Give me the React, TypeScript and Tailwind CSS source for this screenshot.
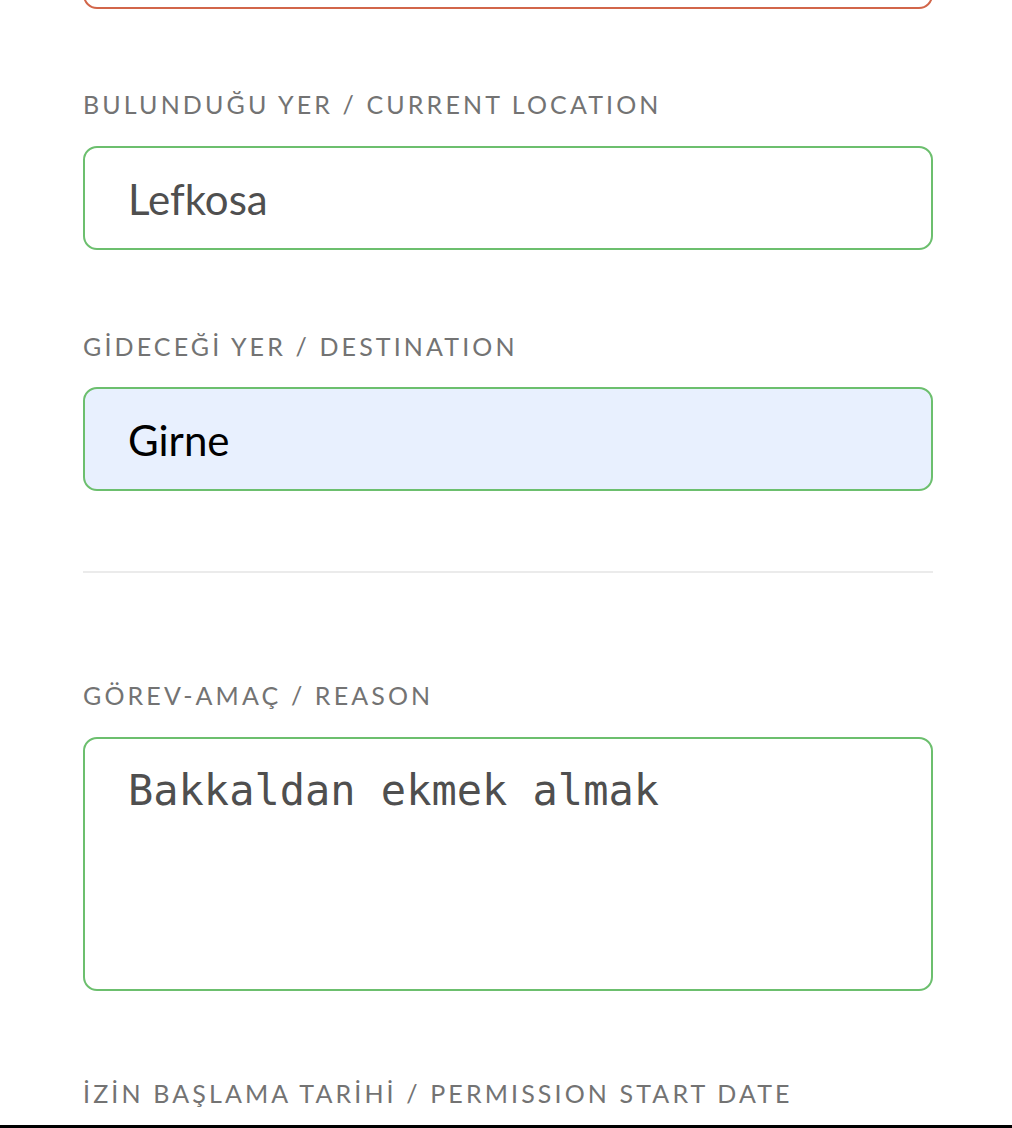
import React from "react";

const Label = ({ children, className = "" }: any) => (
  <div
    className={`h-[30px] leading-[30px] text-[25px] tracking-[0.125em] uppercase text-[#737373] ${className}`}
    style={{ fontFamily: "Lato, 'Noto Sans', sans-serif" }}
  >
    {children}
  </div>
);

export default function App() {
  return (
    <div className="bg-white w-[1012px] h-[1128px] overflow-hidden flex flex-col">
      <div className="h-[1125px] overflow-hidden px-[83px] w-[1016px]">
        {/* previous field, scrolled out of view */}
        <div className="h-[104px] -mt-[95px] rounded-[14px] border-2 border-[#d2664a]" />

        <Label className="mt-[80px]">Bulunduğu Yer / Current Location</Label>
        <div
          className="mt-[27px] h-[104px] rounded-[14px] border-2 border-[#6cbf6e] bg-white flex items-center pl-[43px] pt-[3px] text-[42px] text-[#4f4f4f] [font-variant-ligatures:none]"
          style={{ fontFamily: "Lato, 'Noto Sans', sans-serif" }}
        >
          Lefkosa
        </div>

        <Label className="mt-[81px]">Gİdeceğİ Yer / Destination</Label>
        <div
          className="mt-[26px] h-[104px] rounded-[14px] border-2 border-[#6cbf6e] bg-[#e8f0fe] flex items-center pl-[43px] pt-[3px] text-[42px] text-black"
          style={{ fontFamily: "Lato, 'Noto Sans', sans-serif" }}
        >
          Girne
        </div>

        <div className="mt-[80px] h-[2px] bg-[#ebebeb]" />

        <Label className="mt-[107px]">Görev-Amaç / Reason</Label>
        <div
          className="mt-[27px] h-[254px] rounded-[14px] border-2 border-[#6cbf6e] bg-white pl-[43px] pt-[26px] text-[42px] leading-[52px] text-[#4f4f4f]"
          style={{ fontFamily: "'DejaVu Sans Mono', 'Liberation Mono', monospace" }}
        >
          Bakkaldan ekmek almak
        </div>

        <Label className="mt-[87px]">İzİn Başlama Tarİhİ / Permission Start Date</Label>
      </div>
      <div className="h-[3px] bg-black" />
    </div>
  );
}
